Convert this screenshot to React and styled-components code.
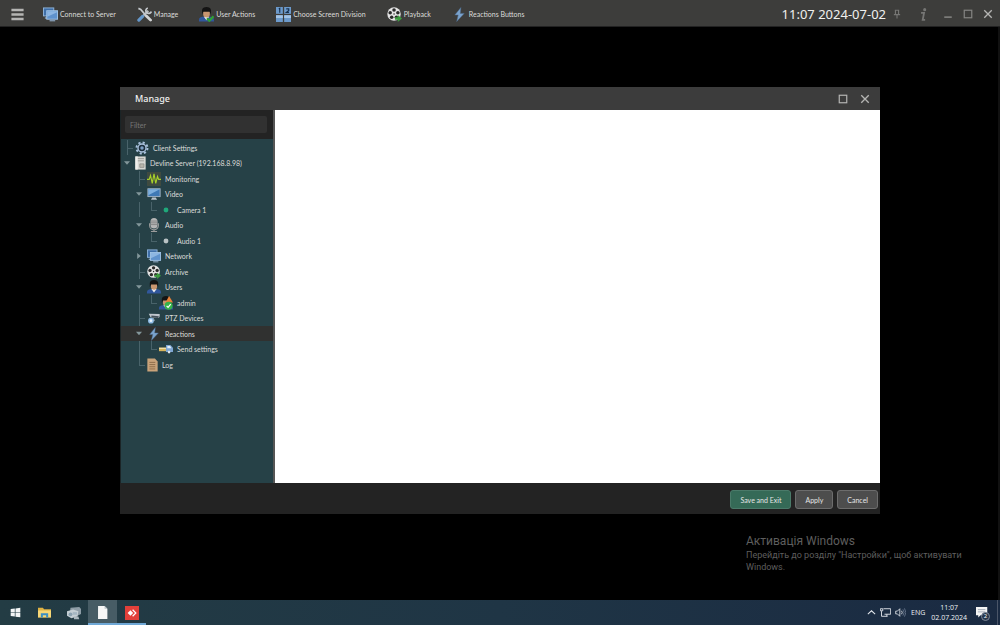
import React, { useState } from 'react';
import styled, { createGlobalStyle } from 'styled-components';

const monitorsIcon = (
    <>
        <rect x="0.5" y="1" width="11" height="8.5" fill="#3f6fa8" stroke="#8fb4da" />
        <path d="M2 11h3v1.5H2z" fill="#8aa3bd" />
        <rect x="4" y="4" width="11.5" height="9" fill="#5f92cc" stroke="#a4c6e8" />
        <path d="M4.500 10.500l10.500-5V4.500H4.500z" fill="#8db6e2" />
        <path d="M7 14h6v1.300H7z" fill="#8aa3bd" />
    </>
)

const reelIcon = (
    <>
        <circle cx="7.5" cy="7.5" r="7.2" fill="#e4e4e4" />
        <g fill="#2b2b2b">
            <circle cx="7.5" cy="3.2" r="1.9" />
            <circle cx="3.4" cy="6.2" r="1.9" />
            <circle cx="11.6" cy="6.2" r="1.9" />
            <circle cx="5" cy="11" r="1.9" />
            <circle cx="10" cy="11" r="1.9" />
            <circle cx="7.5" cy="7.5" r="0.8" />
        </g>
        <path d="M8.5 11h3V8.6l4.5 3.7-4.5 3.7v-2.4h-3z" fill="#3c9b3f" />
    </>
)

const personIcon = (
    <>
        <path d="M0 15.5v-2c0-2 2-3 4-3h8c2 0 4 1 4 3v2z" fill="#31579c" />
        <path d="M5 10.2h6l-3 4z" fill="#f1f1f1" />
        <path d="M4.5 4h7v4c0 2-1.5 3.2-3.5 3.2S4.5 10 4.5 8z" fill="#c99670" />
        <path d="M3.2 8V3.5C3.4 1.2 5.500 0 8 0s4.600 1.200 4.800 3.500V8l-1.500-3H4.700z" fill="#141414" />
    </>
)

const icons = {
    monitors: monitorsIcon,
    reel: reelIcon,
    person: personIcon,
    tools: (
        <>
            <path d="M6.500 9.500l5.500-5.500" stroke="#b9bdc1" strokeWidth="2.2" />
            <path d="M11.500 1a3 3 0 1 0 3.800 3.800" fill="none" stroke="#c5c9cd" strokeWidth="1.8" />
            <path d="M1.5 1.5l2.500 1 5.500 6.500" fill="none" stroke="#c5c9cd" strokeWidth="1.8" />
            <path d="M10 9.5l4.500 4.500" stroke="#d2d4d6" strokeWidth="3" strokeLinecap="round" />
            <path d="M2 14l4-4" stroke="#6597ca" strokeWidth="3.4" strokeLinecap="round" />
        </>
    ),
    userActions: (
        <>
            {personIcon}
            <path d="M8.5 12l2.5 2.6 4.500-4.600" fill="none" stroke="#2fa035" strokeWidth="2.4" />
        </>
    ),
    division: (
        <>
            <g fill="#6c9acb">
                <rect x="0" y="0" width="7.3" height="7.3" />
                <rect x="8.7" y="0" width="7.3" height="7.3" />
                <rect x="0" y="8.7" width="7.3" height="7.3" />
                <rect x="8.7" y="8.7" width="7.3" height="7.3" />
            </g>
            <path d="M0 8.700h7.300v3H0zM8.700 8.700H16v3H8.700z" fill="#a3c4e6" />
            <path d="M3 2.200l1-.7v4.500M10.900 2h2.700v1.700l-2.500 2h2.700" fill="none" stroke="#16304f" strokeWidth="1.2" />
        </>
    ),
    bolt: <path d="M9.5.5L3 8.5h3.600L5 15.500l8-8.700H8.800z" fill="#7ba3cd" stroke="#4a6c90" strokeWidth="0.5" />,
    gear: (
        <>
            <circle cx="8" cy="8" r="6.3" fill="none" stroke="#a9c1dc" strokeWidth="2.2" strokeDasharray="2.47 2.47" />
            <circle cx="8" cy="8" r="4.6" fill="#1c2e3c" stroke="#a9c1dc" strokeWidth="1.6" />
            <circle cx="8" cy="8" r="2" fill="#7d9fc4" />
        </>
    ),
    server: (
        <>
            <rect x="0.5" y="0.5" width="15" height="15" fill="#d6d6d2" />
            <path d="M3 3h10M3 5.5h10" stroke="#8c8c88" />
            <path d="M7 9h6v4H7z" fill="#b9b6ac" stroke="#8c8c88" />
            <path d="M0.5 0.5H4v15H0.500z" fill="#efefec" />
        </>
    ),
    wave: (
        <>
            <rect width="16" height="16" fill="#3f4a40" />
            <path d="M0 8.500h2.500L4 4l2 9L8 2l2 11 2-8 1.300 3.500H16" fill="none" stroke="#a7d129" strokeWidth="1.3" />
        </>
    ),
    screen: (
        <>
            <rect x="1" y="2" width="14" height="9" fill="#3f79b5" stroke="#a9b9c9" />
            <path d="M1.5 9.500v-7h13z" fill="#7fb0de" />
            <path d="M6 12h4l1.500 2.500h-7z" fill="#b9c2ca" />
        </>
    ),
    mic: (
        <>
            <path d="M3 6v2.5a5 5 0 0 0 10 0V6M8 13v2.500M4.5 15.500h7" fill="none" stroke="#9b9b9b" strokeWidth="1.3" />
            <rect x="4" y="0" width="8" height="12" rx="4" fill="#b5b5b5" />
            <path d="M4.500 3.500h7M4.500 5.500h7M4.500 7.500h7" stroke="#777" strokeWidth="0.8" />
        </>
    ),
    admin: (
        <>
            {personIcon}
            <path d="M11.500 0L16 7.500H7.500z" fill="#e8823a" />
            <circle cx="11" cy="11.2" r="4.6" fill="#35b34a" />
            <path d="M8.700 11.200l1.700 1.800 3-3.600" fill="none" stroke="#fff" strokeWidth="1.4" />
        </>
    ),
    ptz: (
        <>
            <path d="M2 3l12.500.5v2.500l-1 2L4 7z" fill="#bfc6cc" />
            <path d="M5 5.200l8.500.8-.5 2L5 7z" fill="#44515a" />
            <path d="M7 8l1.500 3H6" fill="none" stroke="#9aa5ad" />
            <circle cx="4.500" cy="11" r="3.300" fill="#8fbce6" />
            <circle cx="4.500" cy="11" r="1.600" fill="#e8f3fb" />
        </>
    ),
    send: (
        <>
            <path d="M0 6.500h8v4H0z" fill="#d8b45c" />
            <path d="M0 6.500h8v1.500H0z" fill="#f1dfa8" />
            <path d="M8 3.500h5l3 3v5H8z" fill="#7ea6d3" />
            <path d="M9.500 4.500h3.200l1.500 2.500H9.500z" fill="#e4effa" />
            <circle cx="11.500" cy="11.500" r="1.500" fill="#dfe5ea" />
        </>
    ),
    log: (
        <>
            <path d="M0.500 .500h11L15.500 4v11.500h-15z" fill="#c9a37a" />
            <path d="M3.500 5h8.500M3.500 7.500h8.500M3.500 10h8.500M3.500 12.500h8.500" stroke="#80603e" />
        </>
    ),
    dotGreen: <circle cx="8" cy="8" r="2.8" fill="#1fa87a" />,
    dotGrey: <circle cx="8" cy="8" r="2.8" fill="#b9c2c4" />,
    menu: <path d="M0.500 2.500h15M0.500 8h15M0.500 13.500h15" stroke="#b5b5b3" strokeWidth="3.2" />,
    pin: <path d="M4.5 2h7M5.5 2v6.500M10.5 2v6.500M3 9h10M8 9v6" fill="none" stroke="#767674" strokeWidth="1.8" />,
    info: (
        <>
            <circle cx="9.5" cy="2" r="1.9" fill="#767674" />
            <path d="M5 6h3.700L7 14.500h3" fill="none" stroke="#767674" strokeWidth="2.2" />
        </>
    ),
    minimize: <path d="M2 13h12" stroke="#858583" strokeWidth="2.4" />,
    maximize: <rect x="2" y="2" width="12" height="12" fill="none" stroke="currentColor" strokeWidth="1.9" />,
    close: <path d="M2 2l12 12M14 2L2 14" stroke="#b5b5b3" strokeWidth="2.2" />,
    windows: <path d="M1 3l6-.9v5.400H1zM8 2l7-1v6.500H8zM1 8.500h6v5.400L1 13zM8 8.500h7V15l-7-1z" fill="#f2f4f5" />,
    explorer: (
        <>
            <path d="M0 2h6l1.500 2H16v10H0z" fill="#e0b243" />
            <path d="M0 5.500h16V14H0z" fill="#f6d777" />
            <path d="M3.500 9h9v5H10v-2.500H6V14H3.500z" fill="#3b8fc4" />
        </>
    ),
    cameras: (
        <>
            <path d="M4 2l10-1 2 2v6l-4 2-9-2z" fill="#8d9ca6" />
            <path d="M0 6l7-2 6 2-1 6-7 2-5-3z" fill="#c4ced4" />
            <circle cx="4" cy="9.500" r="2.2" fill="#8ba1b0" />
            <path d="M6.500 7h5v3h-5z" fill="#a5b6c2" />
            <path d="M8 12h5l1 3H8z" fill="#aab6bd" />
        </>
    ),
    document: (
        <>
            <path d="M2.500 0h8L14 3.500V16H2.500z" fill="#f7f7f7" />
            <path d="M10.500 0v3.500H14z" fill="#b9c2c6" />
        </>
    ),
    anydesk: (
        <>
            <rect width="16" height="16" fill="#e2403a" />
            <path d="M6.200 4.800L9.400 8l-3.200 3.200L3 8z" fill="#fff" />
            <path d="M9.200 4.800l1-1L14.400 8l-4.200 4.200-1-1L12.400 8z" fill="#fff" transform="translate(-1 0)" />
        </>
    ),
    chevron: <path d="M1.5 11L8 5l6.500 6" fill="none" stroke="#e5e9ee" strokeWidth="1.8" />,
    network: (
        <path d="M5 2.500h10.500v8H6.500M0.500 2.500H4v3H.5zM2.200 6v7.500H11M10 10.500v3" fill="none" stroke="#e5e9ee" strokeWidth="1.3" />
    ),
    speaker: (
        <>
            <path d="M1 6h2.500L7 2.500v11L3.500 10H1z" fill="none" stroke="#e5e9ee" strokeWidth="1.2" />
            <path d="M9.500 5.500q2 2.500 0 5" fill="none" stroke="#e5e9ee" strokeWidth="1.2" />
            <path d="M11.500 3.500q3.500 4.500 0 9M13.800 2q4 6 0 12" fill="none" stroke="#7c8ba0" />
        </>
    ),
    notice: (
        <>
            <path d="M0 0h15v11H6l-3 3v-3H0z" fill="#f5f5f5" />
            <path d="M2.500 3.500h10M2.500 6.500h10" stroke="#8c97a5" />
        </>
    ),
}

const Icon = ({ name, size = 14, narrow = false }) => (
    <svg
        width={narrow ? 11 : size}
        height={size}
        viewBox="0 0 16 16"
        preserveAspectRatio={narrow ? 'none' : 'xMidYMid'}
        aria-hidden="true">
        {icons[name]}
    </svg>
)

const toolbarItems = [
    { icon: 'monitors', label: 'Connect to Server' },
    { icon: 'tools', label: 'Manage' },
    { icon: 'userActions', label: 'User Actions' },
    { icon: 'division', label: 'Choose Screen Division' },
    { icon: 'reel', label: 'Playback' },
    { icon: 'bolt', label: 'Reactions Buttons' },
]

// cells: '' blank, 'line' vertical, 'tee' branch, 'end' last branch, 'open' / 'shut' expander
const treeItems = [
    { icon: 'gear', label: 'Client Settings', cells: ['tee'] },
    { icon: 'server', label: 'Devline Server (192.168.8.98)', cells: ['open'], narrow: true },
    { icon: 'wave', label: 'Monitoring', cells: ['', 'tee'] },
    { icon: 'screen', label: 'Video', cells: ['', 'open'] },
    { icon: 'dotGreen', label: 'Camera 1', cells: ['', 'line', 'end'] },
    { icon: 'mic', label: 'Audio', cells: ['', 'open'] },
    { icon: 'dotGrey', label: 'Audio 1', cells: ['', 'line', 'end'] },
    { icon: 'monitors', label: 'Network', cells: ['', 'shut'] },
    { icon: 'reel', label: 'Archive', cells: ['', 'tee'] },
    { icon: 'person', label: 'Users', cells: ['', 'open'] },
    { icon: 'admin', label: 'admin', cells: ['', 'line', 'end'] },
    { icon: 'ptz', label: 'PTZ Devices', cells: ['', 'tee'] },
    { icon: 'bolt', label: 'Reactions', cells: ['', 'open'] },
    { icon: 'send', label: 'Send settings', cells: ['', 'line', 'end'] },
    { icon: 'log', label: 'Log', cells: ['', 'end'], narrow: true },
]

const App = () => {

    const [selected, setSelected] = useState('Reactions');
    const [filter, setFilter] = useState('');

    return (
        <Page>
            <GlobalStyle />
            <Toolbar>
                <MenuButton aria-label="Menu"><Icon name="menu" size={13} /></MenuButton>
                {toolbarItems.map(item => (
                    <ToolButton key={item.label}>
                        <Icon name={item.icon} size={15} />
                        {item.label}
                    </ToolButton>
                ))}
                <Clock>11:07 2024-07-02</Clock>
                <WindowButtons>
                    <WindowButton $gap={6} aria-label="Pin"><Icon name="pin" size={10} /></WindowButton>
                    <WindowButton $gap={5} aria-label="Info"><Icon name="info" size={13} /></WindowButton>
                    <WindowButton aria-label="Minimize"><Icon name="minimize" size={10} /></WindowButton>
                    <WindowButton aria-label="Maximize"><Icon name="maximize" size={10} /></WindowButton>
                    <WindowButton aria-label="Close"><Icon name="close" size={10} /></WindowButton>
                </WindowButtons>
            </Toolbar>

            <Desktop>
                <Dialog>
                    <TitleBar>
                        <Title>Manage</Title>
                        <WindowButton $light aria-label="Maximize dialog"><Icon name="maximize" size={10} /></WindowButton>
                        <WindowButton $light aria-label="Close dialog"><Icon name="close" size={10} /></WindowButton>
                    </TitleBar>
                    <Body>
                        <Sidebar>
                            <FilterBar>
                                <FilterInput
                                    aria-label="Filter"
                                    placeholder="Filter"
                                    value={filter}
                                    onChange={e => setFilter(e.target.value)} />
                            </FilterBar>
                            <Tree>
                                {treeItems.map(item => (
                                    <TreeItem key={item.label}>
                                        <TreeButton
                                            $active={item.label === selected}
                                            onClick={() => setSelected(item.label)}>
                                            {item.cells.map((cell, i) => <Cell key={i} $kind={cell} />)}
                                            <TreeIcon><Icon name={item.icon} narrow={item.narrow} /></TreeIcon>
                                            {item.label}
                                        </TreeButton>
                                    </TreeItem>
                                ))}
                            </Tree>
                        </Sidebar>
                        <Content />
                    </Body>
                    <Footer>
                        <ActionButton $primary>Save and Exit</ActionButton>
                        <ActionButton>Apply</ActionButton>
                        <ActionButton>Cancel</ActionButton>
                    </Footer>
                </Dialog>
                <Activation>
                    <ActivationTitle>Активація Windows</ActivationTitle>
                    <ActivationText>Перейдіть до розділу "Настройки", щоб активувати Windows.</ActivationText>
                </Activation>
            </Desktop>

            <Taskbar>
                <TaskButton aria-label="Start"><Icon name="windows" size={11} /></TaskButton>
                <TaskButton aria-label="Explorer"><Icon name="explorer" size={13} /></TaskButton>
                <TaskButton aria-label="Cameras"><Icon name="cameras" /></TaskButton>
                <TaskButton $running $active aria-label="Document"><Icon name="document" size={13} /></TaskButton>
                <TaskButton $running aria-label="AnyDesk"><Icon name="anydesk" /></TaskButton>
                <Tray>
                    <Icon name="chevron" size={9} />
                    <Icon name="network" size={11} />
                    <Icon name="speaker" size={11} />
                    <Language>ENG</Language>
                    <TrayClock>
                        <span>11:07</span>
                        <span>02.07.2024</span>
                    </TrayClock>
                    <NoticeButton aria-label="Notifications">
                        <Icon name="notice" size={12} />
                        <Badge>2</Badge>
                    </NoticeButton>
                </Tray>
            </Taskbar>
        </Page>
    );
}

export default App;

const GlobalStyle = createGlobalStyle`
    * {
        box-sizing: border-box;
    }

    body {
        margin: 0;
        background-color: #000;
        font-family: Lato, 'Noto Sans', sans-serif;
        font-size: 7px;
        line-height: 10px;
        color: #dcdcda;
    }

    button, input {
        margin: 0;
        padding: 0;
        border: 0;
        background: none;
        font: inherit;
        color: inherit;
    }

    svg {
        display: block;
        flex: none;
    }
`

const Page = styled.div`
    display: flex;
    flex-direction: column;
    min-height: 100vh;
`

const Toolbar = styled.header`
    display: flex;
    align-items: center;
    gap: 21px;
    height: 27px;
    padding: 2px 2px 0 11px;
    background-color: #3d3d3b;
    border-bottom: 1px solid #222;
`

const MenuButton = styled.button`
    width: 11px;
`

const ToolButton = styled.button`
    display: flex;
    align-items: center;
    gap: 2px;
    white-space: nowrap;
`

const Clock = styled.time`
    margin-left: auto;
    font-family: 'Noto Sans', sans-serif;
    font-size: 13px;
    line-height: 16px;
    color: #f0f0ee;
    white-space: nowrap;
`

const WindowButtons = styled.div`
    display: flex;
    margin-left: -20px;
`

const WindowButton = styled.button`
    display: flex;
    align-items: center;
    justify-content: center;
    width: 20px;
    height: 16px;
    margin-right: ${props => props.$gap || 0}px;
    color: ${props => props.$light ? '#b5b5b3' : '#858583'};
`

const Desktop = styled.main`
    position: relative;
    flex: 1;
    display: flex;
    padding: 60px 12% 86px;
    box-shadow: inset -2px 0 #111;
`

const Dialog = styled.section`
    flex: 1;
    display: flex;
    flex-direction: column;
    background-color: #232323;
`

const TitleBar = styled.div`
    display: flex;
    align-items: center;
    gap: 2px;
    height: 23px;
    padding: 1px 5px 0 15px;
    background-color: #3c3c3c;
`

const Title = styled.h1`
    flex: 1;
    margin: 0;
    font-family: 'Noto Sans', sans-serif;
    font-size: 9px;
    font-weight: 500;
    line-height: 12px;
    color: #f0f0f0;
`

const Body = styled.div`
    flex: 1;
    display: flex;
`

const Sidebar = styled.nav`
    display: flex;
    flex-direction: column;
    width: 155px;
    border-left: 1px solid #1b2426;
    border-right: 2px solid #555;
`

const FilterBar = styled.div`
    padding: 6px 6px 6px 4px;
`

const FilterInput = styled.input`
    display: block;
    width: 100%;
    height: 17px;
    padding: 0 5px;
    border-radius: 2px;
    background-color: #313131;

    &::placeholder {
        color: #777;
        opacity: 1;
    }
`

const Tree = styled.ul`
    flex: 1;
    display: grid;
    grid-auto-rows: 15px 16px;
    align-content: start;
    margin: 0;
    padding: 1px 0 0;
    list-style: none;
    background-color: #264147;
`

const TreeItem = styled.li`
    display: flex;
`

const TreeButton = styled.button`
    flex: 1;
    display: flex;
    align-items: center;
    white-space: nowrap;
    background-color: ${props => props.$active ? '#303130' : 'transparent'};
`

const TreeIcon = styled.span`
    margin: 0 4px 0 2px;
`

const arrows = {
    open: 'polygon(0 20%, 100% 20%, 50% 80%)',
    shut: 'polygon(20% 0, 80% 50%, 20% 100%)',
}

const Cell = styled.span`
    position: relative;
    align-self: stretch;
    width: 12px;

    &::before {
        content: '';
        position: absolute;
        left: 6px;
        top: 0;
        height: ${props => props.$kind === 'end' ? '50%' : '100%'};
        border-left: ${props => ['line', 'tee', 'end'].includes(props.$kind) ? '1px solid #49636a' : 0};
    }

    &::after {
        content: '';
        position: absolute;
        left: ${props => arrows[props.$kind] ? 3 : 6}px;
        top: ${props => arrows[props.$kind] ? 'calc(50% - 3px)' : '50%'};
        width: 6px;
        height: ${props => arrows[props.$kind] ? 6 : 1}px;
        background-color: ${props => {
            if (arrows[props.$kind]) return '#83979b';
            return ['tee', 'end'].includes(props.$kind) ? '#49636a' : 'transparent';
        }};
        clip-path: ${props => arrows[props.$kind] || 'none'};
    }
`

const Content = styled.div`
    flex: 1;
    background-color: #fff;
`

const Footer = styled.div`
    display: flex;
    align-items: center;
    justify-content: flex-end;
    gap: 4px;
    height: 31px;
    padding: 2px 2px 0 0;
`

const ActionButton = styled.button`
    height: 19px;
    padding: 0 9px;
    border: 1px solid ${props => props.$primary ? '#4a7a69' : '#6c6c6c'};
    border-radius: 3px;
    background-color: ${props => props.$primary ? '#356a57' : '#4d4d4d'};
    color: #e6e6e6;
`

const Activation = styled.aside`
    position: absolute;
    right: 34px;
    bottom: 27px;
    width: 220px;
    font-family: Roboto, 'Noto Sans', sans-serif;
    color: #5e5e5e;
`

const ActivationTitle = styled.h2`
    margin: 0;
    font-size: 12px;
    font-weight: 400;
    line-height: 15px;
`

const ActivationText = styled.p`
    margin: 0;
    font-size: 9px;
    line-height: 12px;
`

const Taskbar = styled.footer`
    display: flex;
    height: 25px;
    padding: 0 2px 0 1px;
    background: linear-gradient(90deg, #233c44, #1f3545 50%, #1a2a42);
`

const TaskButton = styled.button`
    display: flex;
    align-items: center;
    justify-content: center;
    width: 29px;
    border-bottom: 2px solid ${props => props.$running ? '#6fa8d6' : 'transparent'};
    border-top: 2px solid transparent;
    background-color: ${props => props.$active ? '#475c65' : 'transparent'};
`

const Tray = styled.div`
    display: flex;
    align-items: center;
    gap: 4px;
    margin-left: auto;
    padding-right: 9px;
    border-right: 1px solid #4a5568;
    font-family: 'Open Sans', 'Noto Sans', sans-serif;
    color: #eef1f4;
`

const Language = styled.span`
    margin: 0 2px 0 1px;
`

const TrayClock = styled.time`
    display: flex;
    flex-direction: column;
    align-items: center;
    margin-right: 5px;
`

const NoticeButton = styled.button`
    position: relative;
    width: 12px;
`

const Badge = styled.span`
    position: absolute;
    left: 5px;
    top: 5px;
    width: 9px;
    height: 9px;
    border: 1px solid #7d8896;
    border-radius: 50%;
    background-color: #27364b;
    font-size: 6px;
    line-height: 7px;
    text-align: center;
    color: #fff;
`
